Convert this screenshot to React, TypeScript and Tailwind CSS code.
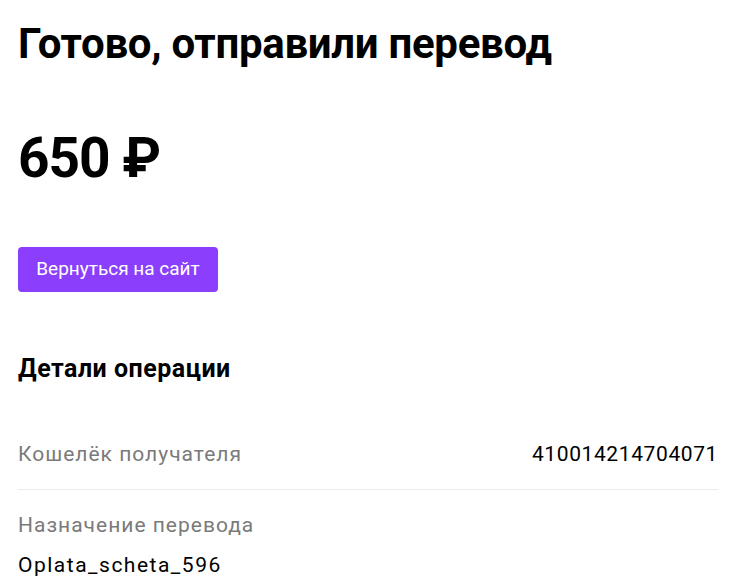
export default function App() {
  return (
    <div className="min-h-screen bg-white pl-[18px] pr-[14px] pt-[16px] font-['Roboto',sans-serif] text-black">
      <h1 className="text-[42px] font-bold leading-[56px] tracking-[-0.3px]">Готово, отправили перевод</h1>

      <div className="mt-[54px] text-[55px] font-bold leading-[64px] tracking-[-1px]">650 ₽</div>

      <button
        type="button"
        className="mt-[57px] flex h-[45px] w-[200px] items-center justify-center rounded-[4px] bg-[#8b3ffd] text-[19px] text-white"
      >
        Вернуться на сайт
      </button>

      <h2 className="mt-[62px] text-[25px] font-bold leading-[30px] tracking-[0.5px]">Детали операции</h2>

      <div className="mt-[57px] flex items-center justify-between border-b border-[#ebebeb] pb-[22px] text-[21px] leading-[26px] tracking-[1px]">
        <span className="text-[#7a7a7a]">Кошелёк получателя</span>
        <span className="tracking-[0.6px]">410014214704071</span>
      </div>

      <div className="pt-[22px] text-[21px] leading-[26px] tracking-[1px]">
        <div className="text-[#7a7a7a]">Назначение перевода</div>
        <div className="mt-[14px] tracking-[1.5px]">Oplata_scheta_596</div>
      </div>
    </div>
  )
}
